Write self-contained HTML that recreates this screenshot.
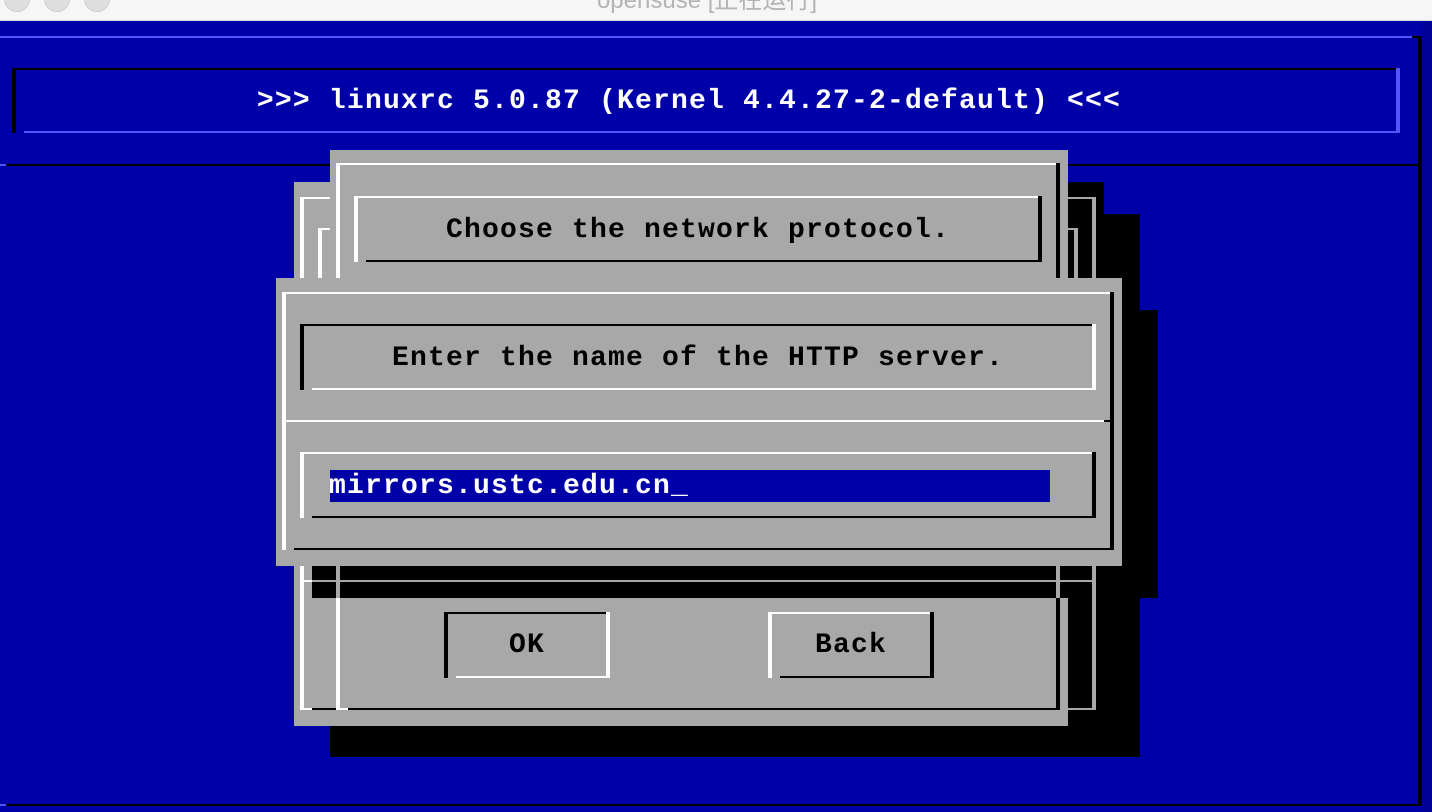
<!DOCTYPE html>
<html><head><meta charset="utf-8">
<style>
*{margin:0;padding:0;box-sizing:border-box}
html,body{width:1432px;height:812px;overflow:hidden;background:#0000a8}
.r{position:absolute}
.t{position:absolute;font-family:"Liberation Mono",monospace;font-weight:bold;font-size:28px;letter-spacing:1.2px;line-height:32px;white-space:pre;text-align:center}
.k{background:#000}.w{background:#fff}.g{background:#a8a8a8}.lb{background:#5454fc}
</style></head><body>
<div class="r" style="left:0;top:0;width:1432px;height:21px;background:#f6f6f6;border-bottom:1px solid #d6d6d6;overflow:hidden">
  <div class="r" style="left:4px;top:-14px;width:26px;height:26px;border-radius:50%;background:#dedede;border:1px solid #d0d0d0"></div>
  <div class="r" style="left:44px;top:-14px;width:26px;height:26px;border-radius:50%;background:#dedede;border:1px solid #d0d0d0"></div>
  <div class="r" style="left:84px;top:-14px;width:26px;height:26px;border-radius:50%;background:#dedede;border:1px solid #d0d0d0"></div>
  <div class="r" style="left:540px;top:-13px;width:334px;text-align:center;font-family:'Liberation Sans','Noto Sans CJK SC',sans-serif;font-size:24px;color:#b4b4b4;line-height:28px">opensuse [正在运行]</div>
</div>
<div class="r" style="left:1422px;top:22px;width:10px;height:790px;background:#000098"></div>
<div class="r lb" style="left:0;top:36px;width:1412px;height:2px"></div>
<div class="r k" style="left:1412px;top:36px;width:10px;height:2px"></div>
<div class="r k" style="left:1418px;top:36px;width:4px;height:770px"></div>
<div class="r lb" style="left:0;top:164px;width:6px;height:2px"></div>
<div class="r k" style="left:6px;top:164px;width:1414px;height:2px"></div>
<div class="r lb" style="left:0;top:804px;width:6px;height:2px"></div>
<div class="r k" style="left:6px;top:804px;width:1416px;height:2px"></div>
<div class="r k" style="left:12px;top:68px;width:1384px;height:2px"></div>
<div class="r k" style="left:12px;top:68px;width:4px;height:65px"></div>
<div class="r lb" style="left:24px;top:131px;width:1376px;height:2px"></div>
<div class="r lb" style="left:1396px;top:68px;width:4px;height:65px"></div>
<div class="t" style="left:0;top:86px;width:1378px;color:#fff">&gt;&gt;&gt; linuxrc 5.0.87 (Kernel 4.4.27-2-default) &lt;&lt;&lt;</div>

<div class="r k" style="left:330px;top:214px;width:810px;height:543px"></div>
<div class="r k" style="left:1068px;top:182px;width:36px;height:32px"></div>
<div class="r k" style="left:1104px;top:310px;width:54px;height:288px"></div>
<div class="r g" style="left:294px;top:182px;width:774px;height:544px"></div>
<div class="r g" style="left:330px;top:150px;width:738px;height:32px"></div>
<div class="r k" style="left:312px;top:566px;width:846px;height:32px"></div>

<div class="r g" style="left:1092px;top:197px;width:4px;height:513px"></div>
<div class="r g" style="left:1068px;top:708px;width:28px;height:2px"></div>
<div class="r g" style="left:1068px;top:228px;width:10px;height:2px"></div>
<div class="r g" style="left:1074px;top:228px;width:4px;height:50px"></div>
<div class="r g" style="left:1068px;top:197px;width:28px;height:2px"></div>
<div class="r g" style="left:312px;top:580px;width:780px;height:2px"></div>
<div class="r g" style="left:1056px;top:566px;width:4px;height:32px"></div>

<div class="r w" style="left:300px;top:197px;width:4px;height:513px"></div>
<div class="r w" style="left:300px;top:197px;width:30px;height:2px"></div>
<div class="r w" style="left:318px;top:228px;width:4px;height:50px"></div>
<div class="r w" style="left:318px;top:228px;width:12px;height:2px"></div>
<div class="r w" style="left:300px;top:580px;width:12px;height:2px"></div>
<div class="r w" style="left:300px;top:708px;width:12px;height:2px"></div>
<div class="r k" style="left:312px;top:708px;width:24px;height:2px"></div>
<div class="r w" style="left:336px;top:163px;width:724px;height:2px"></div>
<div class="r w" style="left:336px;top:163px;width:4px;height:403px"></div>
<div class="r g" style="left:336px;top:566px;width:4px;height:32px"></div>
<div class="r w" style="left:336px;top:598px;width:4px;height:112px"></div>
<div class="r w" style="left:336px;top:708px;width:12px;height:2px"></div>
<div class="r k" style="left:348px;top:708px;width:712px;height:2px"></div>
<div class="r k" style="left:1056px;top:163px;width:4px;height:403px"></div>
<div class="r k" style="left:1056px;top:598px;width:4px;height:112px"></div>

<div class="r w" style="left:354px;top:196px;width:684px;height:2px"></div>
<div class="r w" style="left:354px;top:196px;width:4px;height:66px"></div>
<div class="r k" style="left:366px;top:260px;width:676px;height:2px"></div>
<div class="r k" style="left:1038px;top:196px;width:4px;height:66px"></div>
<div class="t" style="left:354px;top:215px;width:688px;color:#000">Choose the network protocol.</div>

<div class="r k" style="left:444px;top:612px;width:162px;height:2px"></div>
<div class="r k" style="left:444px;top:612px;width:4px;height:66px"></div>
<div class="r w" style="left:456px;top:676px;width:154px;height:2px"></div>
<div class="r w" style="left:606px;top:612px;width:4px;height:66px"></div>
<div class="t" style="left:444px;top:630px;width:166px;color:#000">OK</div>
<div class="r w" style="left:768px;top:612px;width:162px;height:2px"></div>
<div class="r w" style="left:768px;top:612px;width:4px;height:66px"></div>
<div class="r k" style="left:780px;top:676px;width:154px;height:2px"></div>
<div class="r k" style="left:930px;top:612px;width:4px;height:66px"></div>
<div class="t" style="left:768px;top:630px;width:166px;color:#000">Back</div>

<div class="r g" style="left:276px;top:278px;width:846px;height:288px"></div>
<div class="r w" style="left:282px;top:292px;width:828px;height:2px"></div>
<div class="r w" style="left:282px;top:292px;width:4px;height:258px"></div>
<div class="r k" style="left:1110px;top:292px;width:4px;height:258px"></div>
<div class="r k" style="left:294px;top:548px;width:820px;height:2px"></div>
<div class="r w" style="left:286px;top:420px;width:818px;height:2px"></div>
<div class="r k" style="left:1104px;top:420px;width:8px;height:2px"></div>
<div class="r k" style="left:300px;top:324px;width:792px;height:2px"></div>
<div class="r k" style="left:300px;top:324px;width:4px;height:66px"></div>
<div class="r w" style="left:312px;top:388px;width:784px;height:2px"></div>
<div class="r w" style="left:1092px;top:324px;width:4px;height:66px"></div>
<div class="t" style="left:300px;top:343px;width:796px;color:#000">Enter the name of the HTTP server.</div>
<div class="r w" style="left:300px;top:452px;width:792px;height:2px"></div>
<div class="r w" style="left:300px;top:452px;width:4px;height:66px"></div>
<div class="r k" style="left:312px;top:516px;width:784px;height:2px"></div>
<div class="r k" style="left:1092px;top:452px;width:4px;height:66px"></div>
<div class="r" style="left:330px;top:470px;width:720px;height:32px;background:#0000a8"></div>
<div class="t" style="left:329px;top:471px;text-align:left;color:#fff">mirrors.ustc.edu.cn_</div>
</body></html>
